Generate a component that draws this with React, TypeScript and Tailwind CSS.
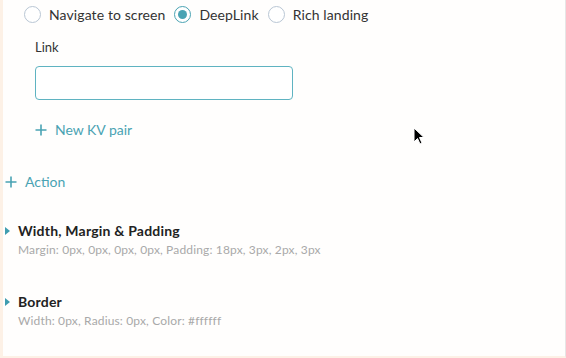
import React from 'react';

function Radio({ label, checked }: { label: string; checked?: boolean }) {
  return (
    <label className="flex items-center gap-[8px]">
      <span
        className={
          checked
            ? 'flex h-[17px] w-[17px] items-center justify-center rounded-full border border-[#4aa3b3] bg-white'
            : 'flex h-[17px] w-[17px] items-center justify-center rounded-full border border-[#b9c6d4] bg-white'
        }
      >
        {checked && <span className="h-[9px] w-[9px] rounded-full bg-[#4aa3b3]" />}
      </span>
      <span className="text-[14px] tracking-[0.1px] text-[#333]">{label}</span>
    </label>
  );
}

function Plus() {
  return (
    <svg width="12" height="12" viewBox="0 0 12 12" className="shrink-0">
      <path d="M6 0.5v11M0.5 6h11" stroke="#4aa3b3" strokeWidth="1.6" />
    </svg>
  );
}

function Section({ title, sub }: { title: string; sub: string }) {
  return (
    <div className="flex gap-[8px]">
      <svg width="5" height="8" viewBox="0 0 5 8" className="mt-[6px] shrink-0">
        <path d="M0 0L5 4L0 8Z" fill="#3f9db0" />
      </svg>
      <div className="flex flex-col">
        <div className="text-[14px] font-bold leading-[20px] tracking-[0.2px] text-[#222]">{title}</div>
        <div className="mt-[0px] text-[12px] leading-[17px] tracking-[0.15px] text-[#a9a9a9]">{sub}</div>
      </div>
    </div>
  );
}

export default function App() {
  return (
    <div
      className="relative flex h-[358px] w-[566px] overflow-hidden bg-[#fffefd]"
      style={{ fontFamily: 'Lato, "Open Sans", sans-serif' }}
    >
      <div className="w-[3px] shrink-0 bg-[#fdf1e6]" />
      <div className="flex flex-1 flex-col border-b-[2px] border-r border-b-[#fdf1e6] border-r-[#e6e6e6] pl-[2px]">
        <div className="flex items-center gap-[9px] pl-[19px] pt-[4px]">
          <Radio label="Navigate to screen" />
          <Radio label="DeepLink" checked />
          <Radio label="Rich landing" />
        </div>

        <div className="pl-[30px] pt-[13px]">
          <div className="text-[13px] leading-[18px] text-[#333]">Link</div>
          <input
            className="mt-[10px] h-[34px] w-[258px] rounded-[4px] border border-[#5fb3c1] bg-white px-2 outline-none"
          />
          <div className="mt-[19px] flex items-center gap-[8px] text-[14px] text-[#4aa3b3]">
            <Plus />
            <span>New KV pair</span>
          </div>
        </div>

        <div className="mt-[31px] flex items-center gap-[8px] text-[14px] text-[#4aa3b3]">
          <Plus />
          <span>Action</span>
        </div>

        <div className="mt-[29px] flex flex-col gap-[34px]">
          <Section
            title="Width, Margin & Padding"
            sub="Margin: 0px, 0px, 0px, 0px, Padding: 18px, 3px, 2px, 3px"
          />
          <Section title="Border" sub="Width: 0px, Radius: 0px, Color: #ffffff" />
        </div>
      </div>

      <svg width="14" height="20" viewBox="0 0 14 20" className="absolute left-[413px] top-[127px]">
        <path d="M1 1L1 15L4.5 11.5L7 17L9 16L6.5 10.5L11 10.5Z" fill="#000" stroke="#fff" strokeWidth="1" />
      </svg>
    </div>
  );
}
